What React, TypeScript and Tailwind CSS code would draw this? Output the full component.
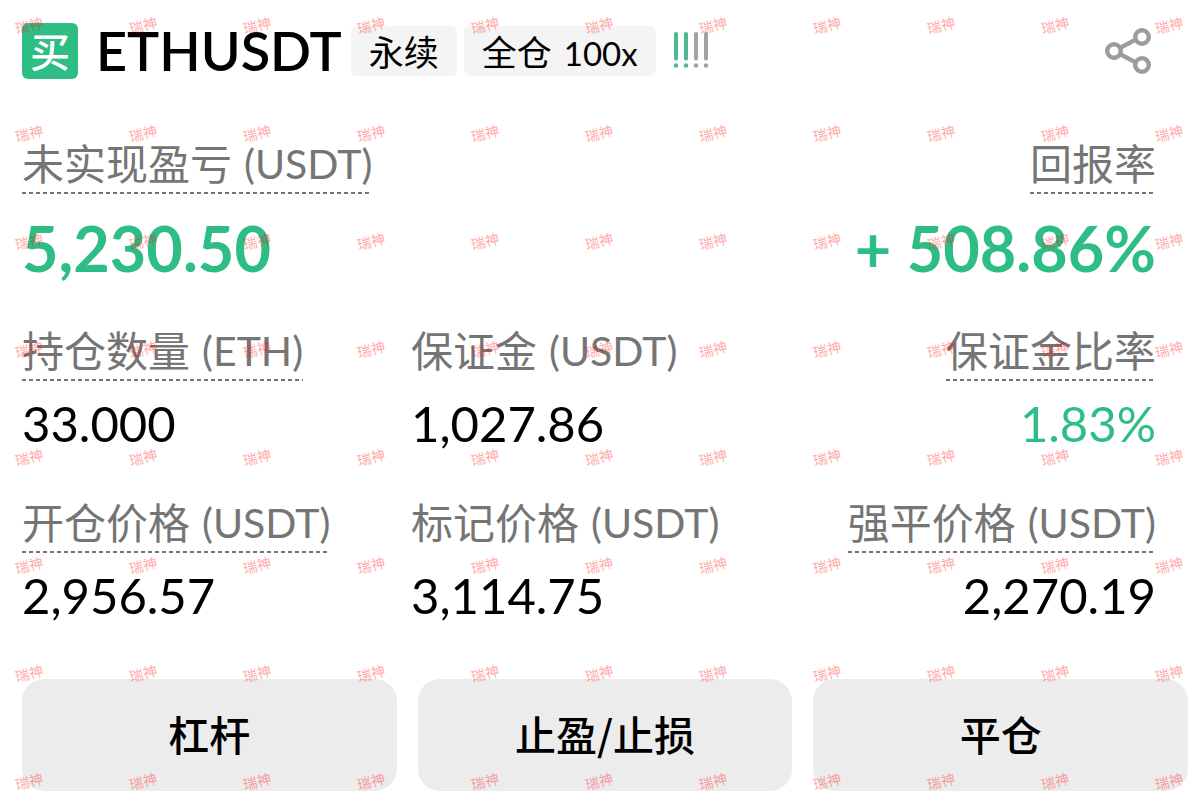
import type { ReactNode } from "react";

const LATIN = "font-['Lato','Noto_Sans_CJK_SC',sans-serif]";
const CJK = "font-['Noto_Sans_CJK_SC',sans-serif]";

function Label({ text, unit, underlined = false }: { text: string; unit?: string; underlined?: boolean }) {
  return (
    <dt className="flex">
      <span
        className={
          "flex h-[55px] items-start gap-3 text-[#757575] " +
          (underlined
            ? "bg-[repeating-linear-gradient(90deg,#757575_0_4px,transparent_4px_7px)] bg-[length:100%_2px] bg-bottom bg-no-repeat"
            : "")
        }
      >
        <span className={`${CJK} text-[42px] leading-[46px]`}>{text}</span>
        {unit && <span className={`${LATIN} text-[41px] leading-[50px]`}>({unit})</span>}
      </span>
    </dt>
  );
}

type StatProps = {
  label: string;
  unit?: string;
  value: string;
  underlined?: boolean;
  end?: boolean;
  green?: boolean;
  large?: boolean;
};

function Stat({ label, unit, value, underlined, end, green, large }: StatProps) {
  return (
    <div className={"flex flex-col whitespace-nowrap " + (end ? "items-end" : "items-start")}>
      <Label text={label} unit={unit} underlined={underlined} />
      <dd
        className={
          (large ? "mt-4 text-[63px] leading-[76px] font-bold " : "mt-3 text-[49px] leading-[60px] ") +
          (green ? "text-[#2ebd85]" : "text-black")
        }
      >
        {value}
      </dd>
    </div>
  );
}

function Chip({ children }: { children: ReactNode }) {
  return (
    <span className="flex h-[50px] items-baseline gap-3 rounded-md bg-[#f4f4f4] px-[18px] leading-[50px]">
      {children}
    </span>
  );
}

function RiskBars() {
  return (
    <svg className="mb-[2px] ml-[18px] h-9 w-9" viewBox="0 0 36 36" role="img" aria-label="ADL">
      {[2, 12, 22, 32].map((x, i) => (
        <g key={x} fill={i < 2 ? "#4fb990" : "#a3a3a3"}>
          <rect x={x - 2} y="0" width="4" height="28.5" rx="1.8" />
          <circle cx={x} cy="33.5" r="2.3" />
        </g>
      ))}
    </svg>
  );
}

function ShareIcon() {
  return (
    <svg className="h-[46px] w-[46px]" viewBox="0 0 46 46" fill="none" stroke="#9c9c9c" strokeWidth="4.4" aria-hidden="true">
      <circle cx="9" cy="23" r="6.8" />
      <circle cx="37" cy="9" r="6.8" />
      <circle cx="37" cy="37" r="6.8" />
      <path d="M14.5 20.2 31 11.4M14.5 25.8 31 34.6" />
    </svg>
  );
}

function Watermark() {
  return (
    <div
      aria-hidden="true"
      className="pointer-events-none absolute inset-0 grid auto-rows-[108px] grid-cols-[repeat(11,114px)] overflow-hidden pt-[15px] pl-[15px]"
    >
      {Array.from({ length: 88 }, (_, i) => (
        <span key={i} className={`${CJK} h-5 w-7 -rotate-[14deg] text-[14px] leading-5 text-[#ff0000]/35`}>
          瑞神
        </span>
      ))}
    </div>
  );
}

export default function App() {
  return (
    <main className={`${LATIN} relative overflow-hidden bg-white pt-[23px] pl-[22px] text-black`}>
      <header className="flex items-center pr-[44px] whitespace-nowrap">
        <span className={`${CJK} flex h-14 w-14 items-center justify-center rounded-md bg-[#2ebd85] pb-[2px] text-[40px] leading-none font-medium text-white`}>
          买
        </span>
        <h1 className="ml-[18px] text-[54px] leading-[56px] font-semibold">ETHUSDT</h1>
        <div className="ml-[9px] flex gap-[7px]">
          <Chip>
            <span className={`${CJK} text-[35px]`}>永续</span>
          </Chip>
          <Chip>
            <span className={`${CJK} text-[35px]`}>全仓</span>
            <span className="text-[33px]">100x</span>
          </Chip>
        </div>
        <RiskBars />
        <button type="button" aria-label="分享" className="ml-auto">
          <ShareIcon />
        </button>
      </header>

      <dl className="mt-[60px] flex justify-between pr-[39px]">
        <Stat label="未实现盈亏" unit="USDT" value="5,230.50" underlined green large />
        <Stat label="回报率" value="+ 508.86%" underlined green large end />
      </dl>
      <dl className="mt-10 grid grid-cols-[389fr_390fr_355fr] gap-y-[45px] pr-[39px]">
        <Stat label="持仓数量" unit="ETH" value="33.000" underlined />
        <Stat label="保证金" unit="USDT" value="1,027.86" />
        <Stat label="保证金比率" value="1.83%" underlined green end />
        <Stat label="开仓价格" unit="USDT" value="2,956.57" underlined />
        <Stat label="标记价格" unit="USDT" value="3,114.75" />
        <Stat label="强平价格" unit="USDT" value="2,270.19" underlined end />
      </dl>

      <div className="mt-[54px] grid grid-cols-3 gap-[21px] pr-[7px]">
        {["杠杆", "止盈/止损", "平仓"].map((name) => (
          <button
            key={name}
            type="button"
            className={`${CJK} h-28 rounded-[22px] bg-[#ececec] pb-1 text-[41px] leading-none font-medium`}
          >
            {name}
          </button>
        ))}
      </div>
      <Watermark />
    </main>
  );
}
